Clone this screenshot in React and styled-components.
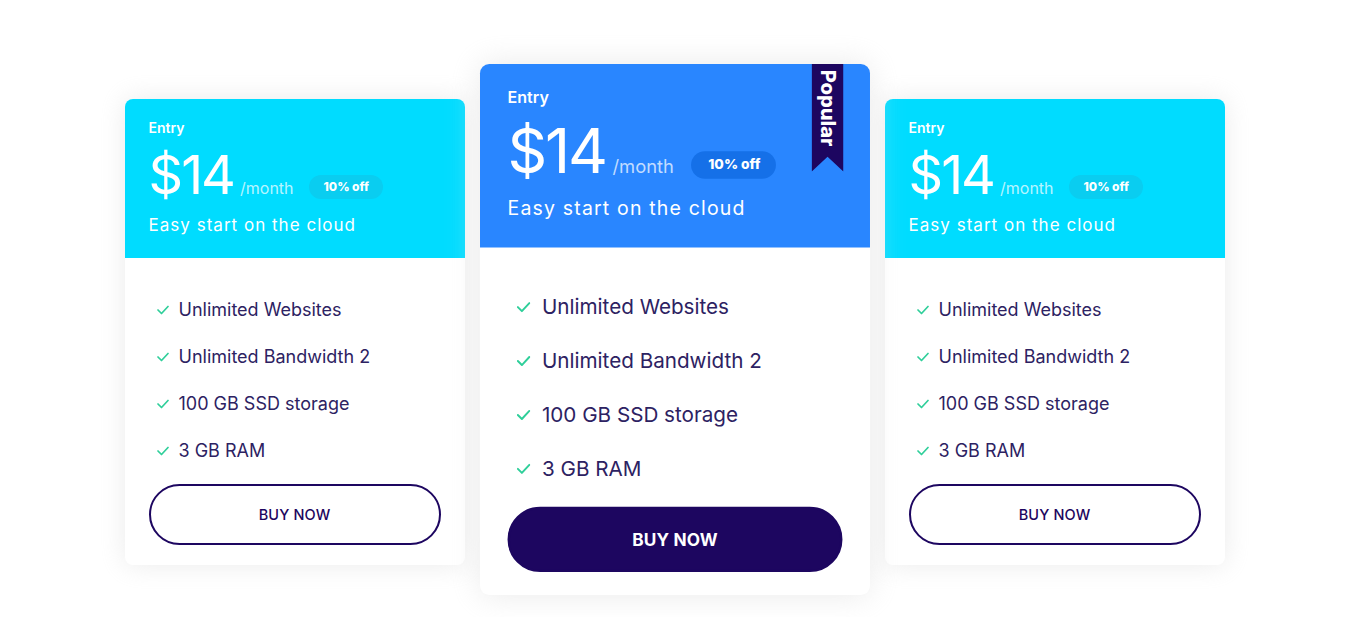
import React from 'react'
import styled, { createGlobalStyle } from 'styled-components'

const GlobalStyle = createGlobalStyle`
  * {
    box-sizing: border-box;
  }
  body {
    margin: 0;
    background: #fff;
    font-family: Inter, 'Noto Sans', sans-serif;
  }
`

const Page = styled.div`
  min-height: 100vh;
  display: flex;
  justify-content: center;
  align-items: flex-start;
  gap: 40px;
  padding-top: 99px;
`

const Card = styled.div`
  width: 340px;
  background: #fff;
  border-radius: 8px;
  box-shadow: 0 0 26px rgba(228, 228, 228, 0.75);
  position: relative;
  z-index: ${({ featured }) => (featured ? 1 : 0)};
  transform: ${({ featured }) => (featured ? 'translateY(-1px) scale(1.147)' : 'none')};
`

const Header = styled.div`
  height: ${({ featured }) => (featured ? '160px' : '159px')};
  background: ${({ featured }) => (featured ? '#2986ff' : '#00dcff')};
  border-radius: 8px 8px 0 0;
  padding: 20px 24px 0;
  color: #fff;
  position: relative;
`

const Plan = styled.div`
  font-size: 14px;
  line-height: 18px;
  font-weight: 600;
`

const PriceRow = styled.div`
  display: flex;
  align-items: baseline;
  margin-top: 11px;
`

const Price = styled.span`
  font-size: 54px;
  line-height: 54px;
  font-weight: 400;
  letter-spacing: -2px;
`

const Period = styled.span`
  font-size: 16px;
  margin-left: 6px;
  color: rgba(255, 255, 255, 0.72);
`

const Badge = styled.span`
  margin-left: 15px;
  align-self: center;
  transform: translateY(12px);
  height: 24px;
  line-height: 24px;
  padding: 0 14px 0 15px;
  border-radius: 12px;
  font-size: 12px;
  font-weight: 800;
  background: ${({ featured }) => (featured ? '#1570e8' : '#0acdf0')};
`

const Tagline = styled.div`
  margin-top: 11px;
  font-size: 17px;
  line-height: 24px;
  letter-spacing: 0.06em;
`

const Ribbon = styled.div`
  position: absolute;
  top: 0;
  right: 23px;
  width: 28px;
  height: 94px;
  background: #1d0660;
  clip-path: polygon(0 0, 100% 0, 100% 100%, 50% 86%, 0 100%);
  display: flex;
  justify-content: center;
  padding-top: 5px;
`

const RibbonText = styled.span`
  writing-mode: vertical-rl;
  font-size: 17.5px;
  font-weight: 800;
  line-height: 28px;
  color: #fff;
`

const Body = styled.div`
  padding: 40px 24px 20px 24px;
`

const Features = styled.ul`
  list-style: none;
  margin: 0;
  padding: 0 0 0 8px;
  display: flex;
  flex-direction: column;
  gap: 23px;
`

const Feature = styled.li`
  display: flex;
  align-items: center;
  gap: 10px;
  font-size: 18px;
  line-height: 24px;
  font-weight: 400;
  color: #2d2262;
`

const BuyButton = styled.button`
  margin-top: 21px;
  width: 100%;
  height: ${({ featured }) => (featured ? '57px' : '61px')};
  border-radius: 31px;
  border: 2px solid #1d0660;
  background: ${({ featured }) => (featured ? '#1d0660' : '#fff')};
  color: ${({ featured }) => (featured ? '#fff' : '#1d0660')};
  font-family: inherit;
  font-size: ${({ featured }) => (featured ? '15px' : '14.5px')};
  font-weight: ${({ featured }) => (featured ? 700 : 500)};
  letter-spacing: 0.01em;
  text-transform: uppercase;
  cursor: pointer;
`

const CheckIcon = () => (
  <svg width="12" height="10" viewBox="0 0 12 10" fill="none">
    <polyline
      points="1,5 4.5,8.5 11,1.5"
      stroke="#2fcf9a"
      strokeWidth="1.7"
      strokeLinecap="round"
      strokeLinejoin="round"
    />
  </svg>
)

const features = [
  'Unlimited Websites',
  'Unlimited Bandwidth 2',
  '100 GB SSD storage',
  '3 GB RAM',
]

const plans = [
  { id: 'a', featured: false },
  { id: 'b', featured: true },
  { id: 'c', featured: false },
]

const PricingCard = ({ featured }) => (
  <Card featured={featured}>
    <Header featured={featured}>
      <Plan>Entry</Plan>
      <PriceRow>
        <Price>$14</Price>
        <Period>/month</Period>
        <Badge featured={featured}>10% off</Badge>
      </PriceRow>
      <Tagline>Easy start on the cloud</Tagline>
      {featured && (
        <Ribbon>
          <RibbonText>Popular</RibbonText>
        </Ribbon>
      )}
    </Header>
    <Body>
      <Features>
        {features.map(f => (
          <Feature key={f}>
            <CheckIcon />
            {f}
          </Feature>
        ))}
      </Features>
      <BuyButton featured={featured}>Buy Now</BuyButton>
    </Body>
  </Card>
)

const App = () => (
  <>
    <GlobalStyle />
    <Page>
      {plans.map(p => (
        <PricingCard key={p.id} featured={p.featured} />
      ))}
    </Page>
  </>
)

export default App
